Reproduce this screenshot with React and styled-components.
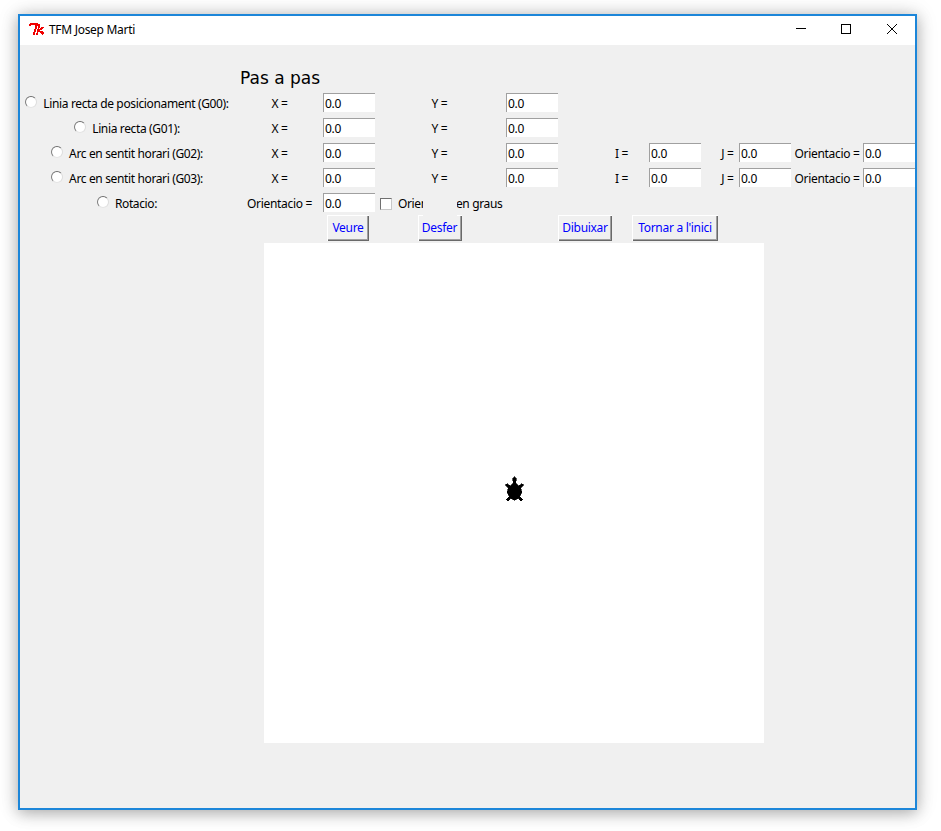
import React from 'react';
import styled, { createGlobalStyle } from 'styled-components';

const Global = createGlobalStyle`
  html, body { margin: 0; padding: 0; background: #fff; }
  body { width: 941px; height: 831px; overflow: hidden; font-family: "Noto Sans", "Liberation Sans", sans-serif; }
`;

const Page = styled.div`
  padding: 14px 24px 21px 18px;
  width: 941px;
  height: 831px;
  box-sizing: border-box;
`;

const Window = styled.div`
  width: 899px;
  height: 796px;
  box-sizing: border-box;
  border: 2px solid #1c86d9;
  background: #f0f0f0;
  box-shadow: 0 3px 14px rgba(0, 0, 0, 0.28), 0 0 22px rgba(0, 0, 0, 0.12);
  display: flex;
  flex-direction: column;
`;

const TitleBar = styled.div`
  height: 29px;
  box-sizing: border-box;
  padding: 0 0 3px 9px;
  background: #fff;
  display: flex;
  align-items: center;
  flex: none;
`;

const AppName = styled.span`
  margin-left: 4px;
  font-size: 12px;
  letter-spacing: -0.3px;
  color: #000;
  flex: 1;
`;

const WinButton = styled.button`
  width: 46px;
  height: 26px;
  padding: 0 0 0 ${(p) => p.$nudge || 0}px;
  border: 0;
  background: transparent;
  display: flex;
  align-items: center;
  justify-content: center;
`;

const Heading = styled.div`
  margin: 21px 0 0 220px;
  height: 25px;
  line-height: 25px;
  font-family: "DejaVu Sans", sans-serif;
  font-size: 17px;
  color: #000;
  flex: none;
`;

const Form = styled.div`
  display: grid;
  grid-template-columns: 214px 89px 52px 131px 52px 91px 52px 38px 52px 72px 52px;
  grid-auto-rows: 25px;
  align-items: center;
  flex: none;
`;

const Spacer = styled.span`
  grid-column: ${(p) => p.$col};
`;

const RadioLabel = styled.label`
  grid-column: 1;
  display: flex;
  align-items: center;
  justify-content: center;
  gap: 6px;
  font-size: 12px;
  letter-spacing: -0.36px;
  color: #000;
  white-space: nowrap;
`;

const Radio = styled.input.attrs({ type: 'radio' })`
  appearance: none;
  width: 12px;
  height: 12px;
  margin: -3px 0 0 0;
  box-sizing: border-box;
  border-radius: 50%;
  border: 1px solid;
  border-color: #6e6e6e #dcdcdc #e4e4e4 #7c7c7c;
  background: #fff;
  flex: none;
`;

const FieldLabel = styled.span`
  font-size: 12px;
  letter-spacing: -0.3px;
  text-align: center;
  white-space: nowrap;
  color: #000;
  padding-left: ${(p) => p.$left || 0}px;
  padding-right: ${(p) => p.$right || 0}px;
`;

const Entry = styled.input.attrs({ type: 'text', readOnly: true, defaultValue: '0.0' })`
  width: 52px;
  height: 19px;
  margin-top: -2px;
  box-sizing: border-box;
  border: 0;
  border-top: 1px solid #a0a0a0;
  border-left: 1px solid #a0a0a0;
  background: #fff;
  padding: 0 0 0 1px;
  font: 12px "Noto Sans", "Liberation Sans", sans-serif;
  letter-spacing: -0.3px;
  color: #000;
  outline: none;
`;

const CheckCell = styled.label`
  grid-column: 4 / span 3;
  position: relative;
  display: flex;
  align-items: center;
  gap: 6px;
  padding-left: 5px;
  font-size: 12px;
  letter-spacing: -0.36px;
  color: #000;
  white-space: nowrap;
`;

const Check = styled.input.attrs({ type: 'checkbox' })`
  appearance: none;
  width: 12px;
  height: 12px;
  margin: 0;
  box-sizing: border-box;
  border: 1px solid #707070;
  border-right-color: #c8c8c8;
  border-bottom-color: #c8c8c8;
  background: #fff;
  flex: none;
`;

const Patch = styled.span`
  position: absolute;
  left: 48px;
  top: 0;
  width: 34px;
  height: 25px;
  background: #f0f0f0;
`;

const Btn = styled.button`
  height: 26px;
  padding: 0;
  margin-top: -2px;
  width: ${(p) => p.$w}px;
  justify-self: ${(p) => (p.$solo ? 'center' : 'auto')};
  margin-right: ${(p) => (p.$solo ? 2 : 0)}px;
  box-sizing: border-box;
  border: 0;
  background: #f0f0f0;
  box-shadow: inset 1px 1px 0 #fff, inset -1px -1px 0 #696969, inset -2px -2px 0 #a0a0a0, inset 2px 2px 0 #f0f0f0;
  color: #0000ff;
  font: 12px "Noto Sans", "Liberation Sans", sans-serif;
  letter-spacing: -0.3px;
  white-space: nowrap;
`;

const BtnGroup = styled.div`
  grid-column: 6 / -1;
  display: flex;
  gap: 20px;
`;

const Canvas = styled.div`
  width: 500px;
  height: 500px;
  margin: 2px 0 0 244px;
  background: #fff;
  flex: none;
  display: flex;
  align-items: center;
  justify-content: center;
`;

const Turtle = styled.svg`
  width: 21px;
  height: 28px;
  margin-top: -6px;
`;

const rows = [
  ['Linia recta de posicionament (G00):', false],
  ['Linia recta (G01):', false],
  ['Arc en sentit horari (G02):', true],
  ['Arc en sentit horari (G03):', true],
];

const turtlePts = [[0,16],[-2,14],[-1,10],[-4,7],[-7,9],[-9,8],[-6,5],[-7,1],[-5,-3],[-8,-6],[-6,-8],[-4,-5],[0,-7],[4,-5],[6,-8],[8,-6],[5,-3],[7,1],[6,5],[9,8],[7,9],[4,7],[1,10],[2,14]]
  .map(([x, y]) => `${x + 10},${16 - y + 0.5}`).join(' ');

export default function App() {
  return (
    <Page>
      <Global />
      <Window>
        <TitleBar>
          <svg width="16" height="13" viewBox="0 0 16 13" fill="none" stroke="#f00000" shapeRendering="crispEdges">
            <path d="M0.5 3 L2 1 H8 L4.5 12" strokeWidth="2" />
            <path d="M10.5 1 L8 12 M14.5 4 L10 7.5 L14 11.5 M12 8.5 L15 10" strokeWidth="1.8" />
          </svg>
          <AppName>TFM Josep Marti</AppName>
          <WinButton aria-label="Minimitza" $nudge={2}>
            <svg width="10" height="10" viewBox="0 0 10 10" stroke="#000" fill="none"><path d="M0 4.5H10" /></svg>
          </WinButton>
          <WinButton aria-label="Maximitza">
            <svg width="10" height="10" viewBox="0 0 10 10" stroke="#000" fill="none"><rect x="0.5" y="0.5" width="9" height="9" /></svg>
          </WinButton>
          <WinButton aria-label="Tanca">
            <svg width="10" height="10" viewBox="0 0 10 10" stroke="#000" fill="none"><path d="M0 0L10 10M10 0L0 10" /></svg>
          </WinButton>
        </TitleBar>
        <Heading>Pas a pas</Heading>
        <Form>
          {rows.map(([label, extra]) => (
            <React.Fragment key={label}>
              <RadioLabel><Radio name="mode" />{label}</RadioLabel>
              <FieldLabel $left={2}>X =</FieldLabel>
              <Entry />
              <FieldLabel $right={2}>Y =</FieldLabel>
              <Entry />
              {extra ? (
                <>
                  <FieldLabel $left={36}>I =</FieldLabel>
                  <Entry />
                  <FieldLabel $left={15}>J =</FieldLabel>
                  <Entry />
                  <FieldLabel>Orientacio =</FieldLabel>
                  <Entry />
                </>
              ) : (
                <Spacer $col="6 / -1" />
              )}
            </React.Fragment>
          ))}
          <RadioLabel><Radio name="mode" />Rotacio:</RadioLabel>
          <FieldLabel $left={2}>Orientacio =</FieldLabel>
          <Entry />
          <CheckCell><Check />Orientacio en graus<Patch /></CheckCell>
          <Spacer $col="7 / -1" />
          <Spacer $col="1 / span 2" />
          <Btn $w={42} $solo>Veure</Btn>
          <Btn $w={44} $solo>Desfer</Btn>
          <Spacer $col="5" />
          <BtnGroup>
            <Btn $w={54}>Dibuixar</Btn>
            <Btn $w={86}>Tornar a l'inici</Btn>
          </BtnGroup>
        </Form>
        <Canvas>
          <Turtle viewBox="0 0 20 27" shapeRendering="crispEdges">
            <polygon points={turtlePts} fill="#000" stroke="#000" strokeWidth="0.6" />
          </Turtle>
        </Canvas>
      </Window>
    </Page>
  );
}
